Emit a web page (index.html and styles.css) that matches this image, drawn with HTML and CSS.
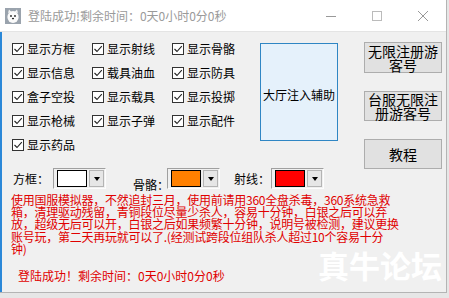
FILE: index.html
```html
<!DOCTYPE html>
<html lang="zh-CN">
<head>
  <meta charset="UTF-8" />
  <title>辅助</title>
  <link rel="stylesheet" href="styles.css">
</head>
<body>
  <div class="window">
    <div class="titlebar">
      <svg class="app-icon" viewBox="0 0 16 16">
        <rect width="16" height="16" fill="#9aa3ad"/>
        <path d="M3 5 L4 1.5 L6.5 4 Z M13 5 L12 1.5 L9.5 4 Z" fill="#f4f4f4"/>
        <ellipse cx="8" cy="9" rx="5.6" ry="6" fill="#fbfbfb"/>
        <circle cx="6" cy="8" r="0.9" fill="#222"/>
        <circle cx="10" cy="8" r="0.9" fill="#222"/>
        <ellipse cx="8" cy="10.6" rx="1.1" ry="0.8" fill="#222"/>
      </svg>
      <span class="title">登陆成功!剩余时间：0天0小时0分0秒</span>
      <div class="controls">
        <span class="ctl"><svg viewBox="0 0 10 10"><path d="M0 5.5 H10" stroke="#999" stroke-width="1"/></svg></span>
        <span class="ctl"><svg viewBox="0 0 10 10"><rect x="0.5" y="0.5" width="9" height="9" fill="none" stroke="#bbb"/></svg></span>
        <span class="ctl"><svg viewBox="0 0 10 10"><path d="M0 0 L10 10 M10 0 L0 10" stroke="#999" stroke-width="1"/></svg></span>
      </div>
    </div>

    <div class="client">
      <div class="top">
        <div class="left">
          <div class="row1">
            <div class="checks">
              <label class="check"><span class="box"></span>显示方框</label>
              <label class="check"><span class="box"></span>显示射线</label>
              <label class="check"><span class="box"></span>显示骨骼</label>
              <label class="check"><span class="box"></span>显示信息</label>
              <label class="check"><span class="box"></span>载具油血</label>
              <label class="check"><span class="box"></span>显示防具</label>
              <label class="check"><span class="box"></span>盒子空投</label>
              <label class="check"><span class="box"></span>显示载具</label>
              <label class="check"><span class="box"></span>显示投掷</label>
              <label class="check"><span class="box"></span>显示枪械</label>
              <label class="check"><span class="box"></span>显示子弹</label>
              <label class="check"><span class="box"></span>显示配件</label>
              <label class="check"><span class="box"></span>显示药品</label>
            </div>
            <button class="inject">大厅注入辅助</button>
          </div>

          <div class="colors">
            <span class="clabel lbl-box">方框：</span>
            <span class="picker"><span class="swatch sw-white"></span><span class="drop"></span></span>
            <span class="clabel lbl-bone">骨骼：</span>
            <span class="picker"><span class="swatch sw-orange"></span><span class="drop"></span></span>
            <span class="clabel lbl-ray">射线：</span>
            <span class="picker"><span class="swatch sw-red"></span><span class="drop"></span></span>
          </div>
        </div>

        <div class="side">
          <button class="btn btn-tall">无限注册游客号</button>
          <button class="btn">台服无限注册游客号</button>
          <button class="btn">教程</button>
        </div>
      </div>

      <p class="notice">使用国服模拟器，不然追封三月，使用前请用360全盘杀毒，360系统急救<br>箱，清理驱动残留，青铜段位尽量少杀人，容易十分钟，白银之后可以弃<br>放，超级无后可以开，白银之后如果频繁十分钟，说明号被检测，建议更换<br>账号玩，第二天再玩就可以了.(经测试跨段位组队杀人超过10个容易十分<br>钟)</p>

      <div class="status">登陆成功！剩余时间：0天0小时0分0秒</div>

      <div class="watermark">真牛论坛</div>
    </div>
  </div>
</body>
</html>
```

FILE: styles.css
```css
body {
  margin: 0;
  background: #e6e6e6;
  font-family: "Noto Sans CJK SC", sans-serif;
  font-size: 12px;
  overflow: hidden;
}
.window {
  width: 447px;
  height: 293px;
  box-sizing: border-box;
  background: #f0f0f0;
  border-right: 1px solid #b4b4b4;
  border-bottom: 1px solid #b4b4b4;
  display: flex;
  flex-direction: column;
}
.titlebar {
  height: 31px;
  flex: none;
  background: #fff;
  border-bottom: 1px solid #e4e4e4;
  display: flex;
  align-items: center;
}
.app-icon {
  width: 16px;
  height: 16px;
  margin-left: 5px;
}
.title {
  margin-left: 7px;
  color: #9a9a9a;
  line-height: 16px;
  white-space: nowrap;
}
.controls {
  margin-left: auto;
  display: flex;
  height: 31px;
}
.ctl {
  width: 46px;
  display: flex;
  align-items: center;
  justify-content: center;
}
.ctl svg {
  width: 10px;
  height: 10px;
}
.client {
  flex: 1;
  position: relative;
  border-left: 2px solid #2b88d8;
  padding: 5px 0 0 10px;
}
.top {
  display: flex;
  align-items: flex-start;
}
.left {
  display: flex;
  flex-direction: column;
}
.row1 {
  display: flex;
  align-items: flex-start;
}
.checks {
  display: grid;
  grid-template-columns: repeat(3, 80px);
  grid-auto-rows: 24px;
}
.check {
  display: flex;
  align-items: center;
  gap: 3px;
  line-height: 14px;
  color: #000;
  white-space: nowrap;
}
.box {
  width: 12px;
  height: 12px;
  box-sizing: border-box;
  border: 1px solid #333;
  background: #fff url("data:image/svg+xml,%3Csvg xmlns='http://www.w3.org/2000/svg' viewBox='0 0 10 10'%3E%3Cpath d='M1.5 5 L4 7.5 L8.8 2.2' fill='none' stroke='%23222' stroke-width='1.1'/%3E%3C/svg%3E") center / 10px 10px no-repeat;
}
button {
  font-family: inherit;
  color: #000;
  padding: 0;
  cursor: pointer;
}
.inject {
  margin: 6px 0 0 8px;
  width: 78px;
  height: 98px;
  font-size: 12px;
  line-height: 14px;
  padding-top: 6px;
  background: #e5f1fb;
  border: 1px solid #2f86c4;
}
.colors {
  display: flex;
  align-items: center;
  height: 21px;
  margin-top: 11px;
}
.clabel {
  white-space: nowrap;
  line-height: 12px;
  font-size: 12px;
}
.lbl-box {
  width: 40px;
  margin-left: 1px;
}
.lbl-bone {
  width: 34px;
  margin-left: 27px;
  align-self: flex-end;
  margin-bottom: -2px;
}
.lbl-ray {
  width: 37px;
  margin-left: 14px;
}
.picker {
  display: flex;
  gap: 2px;
  width: 53px;
  height: 21px;
  box-sizing: border-box;
  padding: 1px 1px 1px 3px;
  border: 1px solid;
  border-color: #a0a0a0 #fdfdfd #fdfdfd #a0a0a0;
  background: #f0f0f0;
}
.swatch {
  width: 30px;
  height: 100%;
  box-sizing: border-box;
  border: 1px solid #000;
}
.sw-white { background: #fff; }
.sw-orange { background: #ff8000; }
.sw-red { background: #ff0000; }
.drop {
  width: 15px;
  height: 100%;
  box-sizing: border-box;
  border: 1px solid #b4b4b4;
  background: #e6e6e6;
  display: flex;
  align-items: center;
  justify-content: center;
}
.drop::after {
  content: "";
  border-left: 3.5px solid transparent;
  border-right: 3.5px solid transparent;
  border-top: 4px solid #000;
}
.side {
  margin: 5px 0 0 26px;
  display: flex;
  flex-direction: column;
  gap: 18px;
}
.btn {
  width: 78px;
  height: 30px;
  font-size: 14px;
  line-height: 14px;
  background: #e1e1e1;
  border: 1px solid #adadad;
}
.btn-tall {
  height: 31px;
}
.notice {
  margin: 5px 0 0 -1px;
  color: #e00000;
  font-size: 12px;
  line-height: 12.2px;
  letter-spacing: -0.25px;
  white-space: nowrap;
}
.status {
  margin: 14px 0 0 6px;
  color: #e00000;
  line-height: 14px;
  white-space: nowrap;
}
.watermark {
  position: absolute;
  left: 316px;
  top: 217px;
  font-size: 31px;
  font-weight: bold;
  line-height: 31px;
  color: #fff;
  white-space: nowrap;
}
```
